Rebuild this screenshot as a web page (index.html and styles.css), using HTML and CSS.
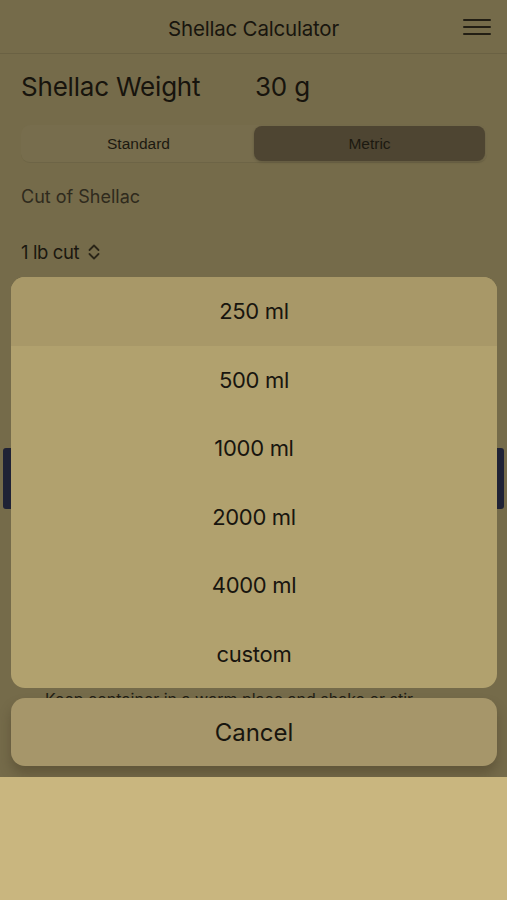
FILE: index.html
```html
<!DOCTYPE html>
<html lang="en">
  <head>
    <meta charset="UTF-8" />
    <meta name="viewport" content="width=device-width, initial-scale=1.0" />
    <title>Shellac Calculator</title>
    <link rel="stylesheet" href="styles.css">
  </head>
  <body>
    <div class="app">
      <header class="topbar">
        <h1>Shellac Calculator</h1>
        <button class="menu-btn" aria-label="Menu">
          <span></span><span></span><span></span>
        </button>
      </header>

      <section class="content">
        <div class="weight-row">
          <span class="weight-label">Shellac Weight</span>
          <span class="weight-value">30 g</span>
        </div>

        <div class="segmented">
          <div class="segment">Standard</div>
          <div class="segment active">Metric</div>
        </div>

        <div class="field-label">Cut of Shellac</div>
        <div class="picker">
          1 lb cut
          <svg width="14" height="18" viewBox="0 0 14 18" fill="none" stroke="currentColor" stroke-width="1.8" stroke-linecap="round" stroke-linejoin="round">
            <path d="M2.5 7 L7 2.5 L11.5 7" />
            <path d="M2.5 11 L7 15.5 L11.5 11" />
          </svg>
        </div>

        <div class="behind">
          <div class="behind-btn"></div>
          <p class="behind-note">Keep container in a warm place and shake or stir</p>
        </div>
      </section>

      <!-- action sheet over the page -->
      <div class="sheet">
        <ul class="sheet-options">
          <li class="pressed">250 ml</li>
          <li>500 ml</li>
          <li>1000 ml</li>
          <li>2000 ml</li>
          <li>4000 ml</li>
          <li>custom</li>
        </ul>
        <button class="sheet-cancel">Cancel</button>
      </div>
    </div>
    <div class="footer-fill"></div>
  </body>
</html>
```

FILE: styles.css
```css
* {
  padding: 0;
  margin: 0;
  box-sizing: border-box;
}

body {
  font-family: Inter, 'Noto Sans', sans-serif;
  background: #c9b67f;
  color: #1a170f;
}

.app {
  position: relative;
  height: 777px;
  background: #756b4a;
  overflow: hidden;
}

.topbar {
  height: 54px;
  display: flex;
  align-items: center;
  justify-content: center;
  border-bottom: 1px solid #6a6143;
  position: relative;
}

.topbar h1 {
  font-size: 20.5px;
  font-weight: 400;
  color: #18150e;
  letter-spacing: -0.2px;
  margin-top: 4px;
}

.menu-btn {
  position: absolute;
  right: 16px;
  top: 19px;
  width: 28px;
  display: flex;
  flex-direction: column;
  gap: 5px;
  background: none;
  border: none;
}

.menu-btn span {
  display: block;
  height: 2px;
  background: #221e14;
  border-radius: 1px;
}

.content {
  padding: 0 20px 0 21px;
}

.weight-row {
  display: flex;
  align-items: baseline;
  height: 68px;
  padding-top: 17px;
  font-size: 26px;
  color: #17140d;
  letter-spacing: -0.2px;
}

.weight-label {
  width: 234px;
}

.segmented {
  display: flex;
  height: 38px;
  margin-top: 3px;
  padding: 1px 2px;
  background: #776d4d;
  border-radius: 9px;
  border-bottom: 1px solid #6d6446;
}

.segment {
  flex: 1;
  display: flex;
  align-items: center;
  justify-content: center;
  font-size: 15.5px;
  font-family: 'Liberation Sans', Arial, sans-serif;
  color: #1c1910;
  border-radius: 8px;
}

.segment.active {
  background: #4e4532;
  box-shadow: 0 1px 3px rgba(0, 0, 0, 0.2);
}

.field-label {
  margin-top: 23px;
  font-size: 18px;
  color: #2f2a1d;
}

.picker {
  margin-top: 34px;
  display: flex;
  align-items: center;
  gap: 6px;
  font-size: 18.5px;
  color: #1a170f;
  letter-spacing: -0.4px;
}

.picker svg {
  color: #2a2518;
  margin-left: 2px;
}

.behind {
  margin-top: 185px;
  margin-left: -18px;
  margin-right: -17px;
}

.behind-btn {
  height: 61px;
  background: #1f2235;
  border-radius: 3px;
}

.behind-note {
  margin-top: 180px;
  padding-left: 42px;
  font-size: 16px;
  color: #221e14;
}

.sheet {
  position: absolute;
  left: 11px;
  right: 10px;
  top: 277px;
  display: flex;
  flex-direction: column;
  gap: 10px;
}

.sheet-options {
  list-style: none;
  background: #b1a16e;
  border-radius: 14px;
  overflow: hidden;
}

.sheet-options li {
  height: 68.5px;
  display: flex;
  align-items: center;
  justify-content: center;
  font-size: 22px;
  color: #18150e;
  letter-spacing: -0.3px;
}

.sheet-options li.pressed {
  background: #a89868;
}

.sheet-cancel {
  height: 68px;
  border: none;
  border-radius: 14px;
  background: #a6966a;
  font-family: Inter, 'Noto Sans', sans-serif;
  font-size: 24px;
  color: #18150e;
  box-shadow: 0 8px 12px rgba(60, 50, 30, 0.35);
}

.footer-fill {
  height: 123px;
}
```
